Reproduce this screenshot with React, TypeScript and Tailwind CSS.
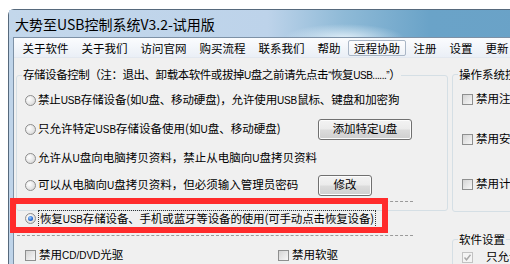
import React from "react";

const FONT = { fontFamily: '"Noto Sans CJK SC", "Noto Sans", sans-serif' };

function T({ s }: { s: string }) {
  const parts = s.split(/([A-Za-z0-9.\/“”]+)/);
  return (
    <>
      {parts.map((p, i) =>
        /^[A-Za-z0-9.\/“”]+$/.test(p) ? (
          <span key={i} className="text-[10px] font-['Liberation_Sans',sans-serif]">
            {p}
          </span>
        ) : (
          <React.Fragment key={i}>{p}</React.Fragment>
        )
      )}
    </>
  );
}

function Radio({ checked = false }: { checked?: boolean }) {
  return (
    <span className="relative inline-flex w-[11px] h-[11px] shrink-0 rounded-full border border-[#8d8d8d] bg-[radial-gradient(circle_at_35%_35%,#ffffff_0%,#e6e6e6_55%,#cfcfcf_100%)] items-center justify-center">
      {checked && (
        <span className="block w-[5px] h-[5px] rounded-full bg-[radial-gradient(circle_at_40%_35%,#9fd0ff_0%,#2a6fd6_55%,#18449a_100%)]" />
      )}
    </span>
  );
}

function Check({ disabled = false, checked = false }: { disabled?: boolean; checked?: boolean }) {
  return (
    <span
      className={
        disabled
          ? "relative inline-flex w-[11px] h-[11px] shrink-0 border border-[#c2c2c2] bg-[#f4f4f4] items-center justify-center"
          : "relative inline-flex w-[11px] h-[11px] shrink-0 border border-[#8e8f8f] bg-[linear-gradient(135deg,#d4d4d4,#f7f7f7)] items-center justify-center"
      }
    >
      {checked && (
        <svg width="9" height="9" viewBox="0 0 9 9">
          <path d="M1.5 4.5 L3.5 6.8 L7.5 1.8" fill="none" stroke="#a8a8a8" strokeWidth="1.4" />
        </svg>
      )}
    </span>
  );
}

function Btn({ w, h, children }: { w: string; h: string; children: React.ReactNode }) {
  return (
    <div
      className={`${w} ${h} shrink-0 flex items-center justify-center rounded-[3px] border border-[#707070] bg-[linear-gradient(#f3f3f3_0%,#ebebeb_48%,#dcdcdc_52%,#cfcfcf_100%)] text-[11.5px] text-black shadow-[inset_0_0_0_1px_#fcfcfc]`}
    >
      {children}
    </div>
  );
}

export default function App() {
  const menus = ["关于软件", "关于我们", "访问官网", "购买流程", "联系我们", "帮助"];
  return (
    <div className="w-[510px] h-[264px] overflow-hidden bg-white pl-[8px] pt-[9px] relative" style={FONT}>
      <div className="w-[540px] h-[300px] rounded-tl-[6px] border-l border-t border-[#56697c] bg-[#bfd4e9] flex flex-col">
        {/* title bar */}
        <div className="h-[27px] shrink-0 flex items-center pl-[6px] bg-[radial-gradient(ellipse_60px_14px_at_335px_28px,rgba(235,245,252,0.85),transparent),linear-gradient(90deg,#c3d7eb_0%,#bdd3ea_48%,#8fbad7_62%,#6aa3c8_78%,#6aa2c7_100%)]">
          <span className="text-[14px] leading-none text-black">大势至USB控制系统V3.2-试用版</span>
        </div>
        {/* client */}
        <div className="flex-1 ml-[4px] border-l border-t border-[#7d91a6] bg-[#f0f0f0] flex flex-col">
          {/* menu bar */}
          <div className="h-[20px] shrink-0 flex items-center pl-[2px] bg-[linear-gradient(#fbfcfe,#eaeff6)] border-b border-[#e3e8ef] text-[11.5px] text-black">
            {menus.map((m) => (
              <span key={m} className="px-[6.5px] leading-[16px]">{m}</span>
            ))}
            <span className="px-[5px] leading-[14px] ml-[1px] rounded-[2px] border border-[#a9b6c6] bg-[linear-gradient(#fdfdfe,#eef2f7)]">远程协助</span>
            <span className="px-[6.5px] ml-[1px] leading-[16px]">注册</span>
            <span className="px-[6.5px] leading-[16px]">设置</span>
            <span className="px-[6.5px] leading-[16px]">更新</span>
          </div>
          {/* content */}
          <div className="flex flex-1 text-[11.5px] text-black">
            {/* left column */}
            <div className="w-[434px] shrink-0 pl-[2px] flex flex-col">
              <fieldset className="mt-[8px] w-[432px] border border-[#d5dfe5] rounded-[3px] pb-[14px]">
                <legend className="ml-[5px] px-[1px] leading-[16px] whitespace-nowrap tracking-[-0.45px]">
                  <T s="存储设备控制（注：退出、卸载本软件或拔掉U盘之前请先点击“恢复USB......”）" />
                </legend>
                <div className="h-[32px] flex items-center pl-[8px] gap-[2px]">
                  <Radio />
                  <span className="tracking-[-0.15px]"><T s="禁止USB存储设备(如U盘、移动硬盘)，允许使用USB鼠标、键盘和加密狗" /></span>
                </div>
                <div className="h-[26px] flex items-center pl-[8px] gap-[2px]">
                  <Radio />
                  <span className="w-[278px]"><T s="只允许特定USB存储设备使用(如U盘、移动硬盘)" /></span>
                  <Btn w="w-[94px]" h="h-[21px]"><T s="添加特定U盘" /></Btn>
                </div>
                <div className="h-[32px] flex items-center pl-[8px] gap-[2px]">
                  <Radio />
                  <span><T s="允许从U盘向电脑拷贝资料，禁止从电脑向U盘拷贝资料" /></span>
                </div>
                <div className="h-[22px] flex items-center pl-[8px] gap-[2px]">
                  <Radio />
                  <span className="w-[278px]"><T s="可以从电脑向U盘拷贝资料，但必须输入管理员密码" /></span>
                  <Btn w="w-[54px]" h="h-[21px]">修改</Btn>
                </div>
              </fieldset>
              <div className="mt-[-10px] w-[396px] ml-[1px] border-t border-dashed border-[#9a9a9a]" />
              <div className="h-[33px] flex items-center pl-[9px] gap-[2px]">
                <Radio checked />
                <span className="border border-dotted border-[#333] leading-[14px] px-[1px] tracking-[-0.15px]">
                  <T s="恢复USB存储设备、手机或蓝牙等设备的使用(可手动点击恢复设备)" />
                </span>
              </div>
              <div className="w-[396px] ml-[1px] border-t border-dashed border-[#9a9a9a]" />
              <div className="h-[38px] flex items-center pl-[9px]">
                <div className="w-[253px] flex items-center gap-[3px]">
                  <Check />
                  <span><T s="禁用CD/DVD光驱" /></span>
                </div>
                <div className="flex items-center gap-[3px]">
                  <Check />
                  <span>禁用软驱</span>
                </div>
              </div>
            </div>
            {/* right column */}
            <div className="flex-1 pl-[4px] flex flex-col">
              <fieldset className="mt-[8px] w-[120px] h-[146px] border border-[#d5dfe5] rounded-[3px]">
                <legend className="ml-[5px] px-[1px] leading-[16px] whitespace-nowrap">操作系统控制</legend>
                <div className="h-[34px] flex items-center pl-[9px] gap-[3px] whitespace-nowrap">
                  <Check />
                  <span>禁用注册表</span>
                </div>
                <div className="h-[46px] flex items-center pl-[9px] gap-[3px] whitespace-nowrap">
                  <Check />
                  <span>禁用安全模式</span>
                </div>
                <div className="h-[44px] flex items-center pl-[9px] gap-[3px] whitespace-nowrap">
                  <Check />
                  <span>禁用计算机管理</span>
                </div>
              </fieldset>
              <fieldset className="mt-[19px] w-[120px] h-[60px] border border-[#d5dfe5] rounded-[3px]">
                <legend className="ml-[5px] px-[1px] leading-[16px]">软件设置</legend>
                <div className="h-[20px] flex items-center pl-[9px] gap-[13px] whitespace-nowrap">
                  <Check disabled checked />
                  <span>只允许</span>
                </div>
              </fieldset>
            </div>
          </div>
        </div>
      </div>
      {/* red annotation box */}
      <div className="absolute left-[10px] top-[198px] w-[378px] h-[35px] border-[6px] border-[#ff2b2b] pointer-events-none" />
    </div>
  );
}
